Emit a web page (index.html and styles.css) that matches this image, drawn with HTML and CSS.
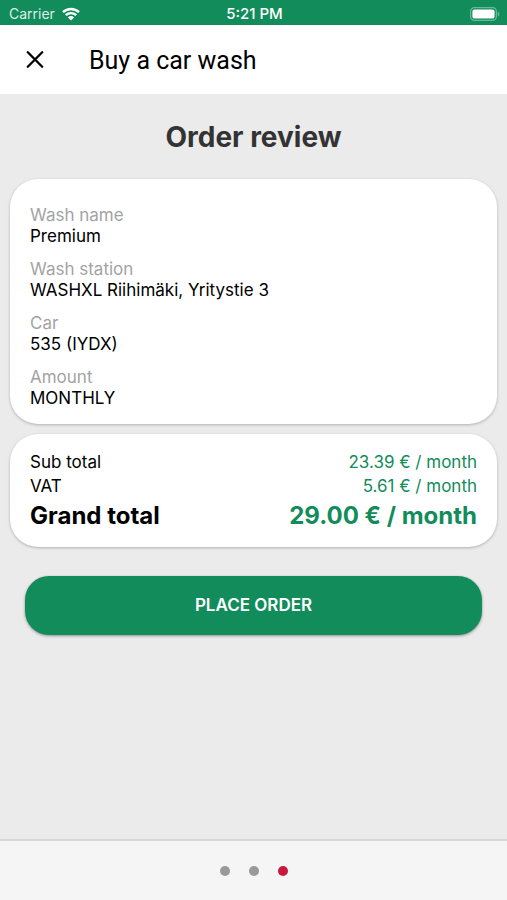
FILE: index.html
```html
<!DOCTYPE html>
<html lang="en">
<head>
<meta charset="utf-8">
<meta name="viewport" content="width=device-width, initial-scale=1">
<title>Buy a car wash</title>
<link rel="stylesheet" href="styles.css">
</head>
<body>
<div class="status">
  <span class="carrier">Carrier
    <svg class="wifi" viewBox="0 0 18 14" aria-hidden="true"><path d="M1 5.2a11.5 11.5 0 0 1 16 0M3.8 8.2a7.5 7.5 0 0 1 10.4 0" fill="none" stroke="#fff" stroke-width="2.4"/><path d="M9 13.6 5.9 10.4a4.4 4.4 0 0 1 6.2 0z" fill="#fff"/></svg>
  </span>
  <span class="clock">5:21 PM</span>
  <svg class="battery" viewBox="0 0 30 14" aria-hidden="true"><rect x=".6" y=".6" width="25.8" height="12.8" rx="3.8" fill="none" stroke="#6bb895" stroke-width="1.2"/><rect x="2.4" y="2.4" width="22.2" height="9.2" rx="2.2" fill="#fff"/><path d="M27.8 4.6v4.8q1.7-.8 1.7-2.4t-1.7-2.4z" fill="#6bb895"/></svg>
</div>
<header class="bar">
  <button class="close" type="button" aria-label="Close"><svg viewBox="0 0 18 18" aria-hidden="true"><path d="m1.8 1.3 14.4 14.4m0-14.4-14.4 14.4" fill="none" stroke="#000" stroke-width="2.3" stroke-linecap="round"/></svg></button>
  <h1 class="title">Buy a car wash</h1>
</header>
<main class="content">
  <h2 class="heading">Order review</h2>
  <dl class="card details">
    <div><dt>Wash name</dt><dd>Premium</dd></div>
    <div><dt>Wash station</dt><dd>WASHXL Riihimäki, Yritystie 3</dd></div>
    <div><dt>Car</dt><dd>535 (IYDX)</dd></div>
    <div><dt>Amount</dt><dd>MONTHLY</dd></div>
  </dl>
  <dl class="card totals">
    <div class="row"><dt>Sub total</dt><dd>23.39 € / month</dd></div>
    <div class="row"><dt>VAT</dt><dd>5.61 € / month</dd></div>
    <div class="row grand"><dt>Grand total</dt><dd>29.00 € / month</dd></div>
  </dl>
  <button class="order" type="button">PLACE ORDER</button>
</main>
<footer class="steps"><i class="dot"></i><i class="dot"></i><i class="dot active"></i></footer>
</body>
</html>
```
FILE: styles.css
```css
* { box-sizing: border-box; }
body {
  margin: 0;
  min-height: 100vh;
  display: flex;
  flex-direction: column;
  background: #ebebeb;
  color: #000;
  font-family: Inter, "Liberation Sans", sans-serif;
  font-size: 17px;
}
h1, h2, dl, dd { margin: 0; }
.status {
  display: grid;
  grid-template-columns: 1fr auto 1fr;
  align-items: center;
  height: 25px;
  padding: 2px 7px 0 9px;
  background: #128c5b;
  color: #fff;
  font-size: 14px;
}
.carrier { display: flex; align-items: center; gap: 7px; color: #dceee6; }
.wifi { width: 18px; height: 14px; }
.clock { font-size: 15px; font-weight: 500; }
.battery { width: 30px; height: 14px; justify-self: end; }
.bar {
  display: flex;
  align-items: center;
  gap: 36px;
  height: 69px;
  padding: 0 16px;
  background: #fff;
}
.close {
  display: grid;
  place-items: center;
  width: 37px;
  height: 40px;
  padding: 0;
  border: 0;
  background: none;
}
.close svg { width: 18px; height: 18px; }
.title { padding-top: 2px; font-family: Roboto, "Liberation Sans", sans-serif; font-size: 25px; font-weight: 400; line-height: 32px; }
.content { flex: 1; padding: 26px 10px; }
.heading {
  margin-bottom: 24px;
  color: #333;
  font-size: 28px;
  line-height: 35px;
  text-align: center;
}
.card {
  margin-bottom: 10px;
  border-radius: 28px;
  background: #fff;
  box-shadow: 0 1px 3px rgba(0, 0, 0, 0.25);
}
.details { display: grid; gap: 12px; padding: 26px 20px 15px; line-height: 21px; }
.details dt { color: #a3a3a3; }
.totals { padding: 16px 20px 13px; line-height: 24px; }
.row { display: flex; justify-content: space-between; }
.row dd { color: #128c5b; }
.grand { font-size: 24px; font-weight: 700; line-height: 36px; }
.order {
  display: block;
  width: calc(100% - 30px);
  height: 59px;
  margin: 29px auto 0;
  padding: 0 0 2px;
  border: 0;
  border-radius: 24px;
  background: #128c5b;
  box-shadow: 0 1px 3px rgba(0, 0, 0, 0.4);
  color: #fff;
  font: 600 17px Inter, "Liberation Sans", sans-serif;
}
.steps {
  display: flex;
  align-items: center;
  justify-content: center;
  gap: 19px;
  height: 61px;
  border-top: 2px solid #d8d8d8;
  background: #f5f5f5;
}
.dot { width: 10px; height: 10px; border-radius: 50%; background: #999; }
.active { background: #c8193c; }
```
